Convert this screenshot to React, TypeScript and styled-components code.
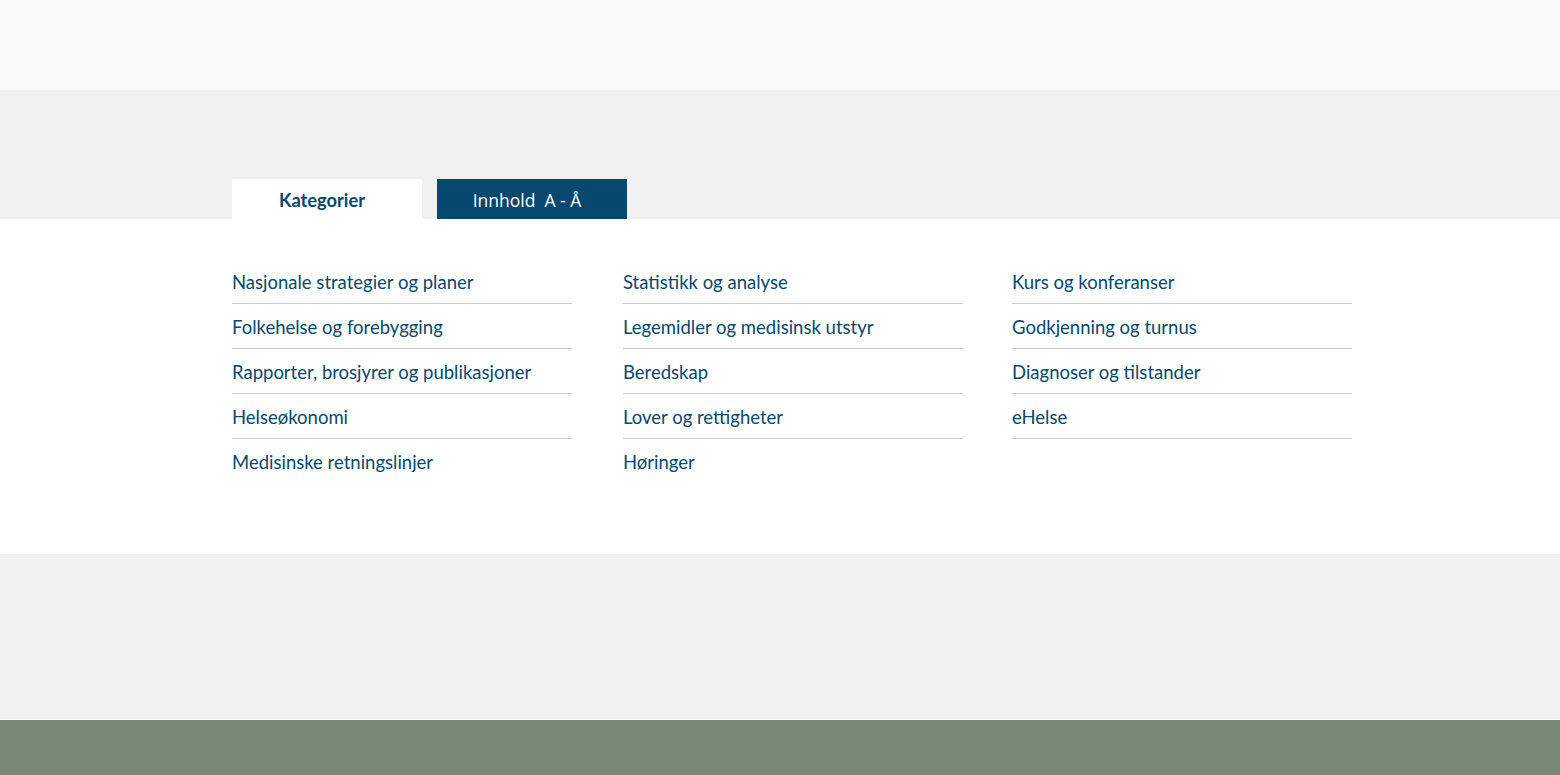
import styled, { createGlobalStyle } from "styled-components";

const GlobalStyle = createGlobalStyle`
  html, body {
    margin: 0;
    padding: 0;
    background: #f1f1f1;
    font-family: Lato, "Open Sans", sans-serif;
  }
`;

const columns: { title: string }[][] = [
    [
        { title: "Nasjonale strategier og planer" },
        { title: "Folkehelse og forebygging" },
        { title: "Rapporter, brosjyrer og publikasjoner" },
        { title: "Helseøkonomi" },
        { title: "Medisinske retningslinjer" },
    ],
    [
        { title: "Statistikk og analyse" },
        { title: "Legemidler og medisinsk utstyr" },
        { title: "Beredskap" },
        { title: "Lover og rettigheter" },
        { title: "Høringer" },
    ],
    [
        { title: "Kurs og konferanser" },
        { title: "Godkjenning og turnus" },
        { title: "Diagnoser og tilstander" },
        { title: "eHelse" },
    ],
];

export default function App() {
    return (
        <Page>
            <GlobalStyle />
            <TopBand />
            <TabArea>
                <Tabs>
                    <Tab active>Kategorier</Tab>
                    <Tab>Innhold&nbsp; A - Å</Tab>
                </Tabs>
            </TabArea>
            <Panel>
                <Grid>
                    {columns.map((col, ci) => (
                        <Column key={ci}>
                            {col.map((item, i) => (
                                <Item key={item.title} noBorder={i === 4}>
                                    <ItemLink href="#">{item.title}</ItemLink>
                                </Item>
                            ))}
                        </Column>
                    ))}
                </Grid>
            </Panel>
            <Spacer />
            <Footer />
        </Page>
    );
}

const Page = styled.div`
  display: flex;
  flex-direction: column;
  min-height: 775px;
`;

const TopBand = styled.div`
  height: 90px;
  background: #f8f9f9;
`;

const TabArea = styled.div`
  padding-top: 89px;
  background: #f1f1f1;
`;

const Tabs = styled.div`
  display: flex;
  gap: 15px;
  margin-left: 232px;
`;

const Tab = styled.button<{ active?: boolean }>`
  width: 190px;
  height: 40px;
  border: 0;
  padding: 1px 10px 0 0;
  font-family: ${(p) => (p.active ? "Lato" : "\"Open Sans\"")}, sans-serif;
  font-size: ${(p) => (p.active ? "18.3px" : "17.5px")};
  font-weight: ${(p) => (p.active ? 700 : 400)};
  background: ${(p) => (p.active ? "#ffffff" : "#07486e")};
  color: ${(p) => (p.active ? "#07486e" : "#ffffff")};
  cursor: pointer;
`;

const Panel = styled.div`
  background: #ffffff;
  padding: 40px 0 70px 232px;
`;

const Grid = styled.div`
  display: grid;
  grid-template-columns: 391px 389px 340px;
`;

const Column = styled.ul`
  list-style: none;
  margin: 0;
  padding: 0;
  width: 340px;
`;

const Item = styled.li<{ noBorder?: boolean }>`
  padding: 13px 0 10px;
  line-height: 21px;
  border-bottom: 1px solid ${(p) => (p.noBorder ? "transparent" : "#cccccc")};
`;

const ItemLink = styled.a`
  color: #07486e;
  font-size: 18.5px;
  text-decoration: none;
`;

const Spacer = styled.div`
  flex: 1;
  background: #f1f1f1;
`;

const Footer = styled.div`
  height: 55px;
  background: #778a76;
  border-top: 1px solid #fafafa;
`;
